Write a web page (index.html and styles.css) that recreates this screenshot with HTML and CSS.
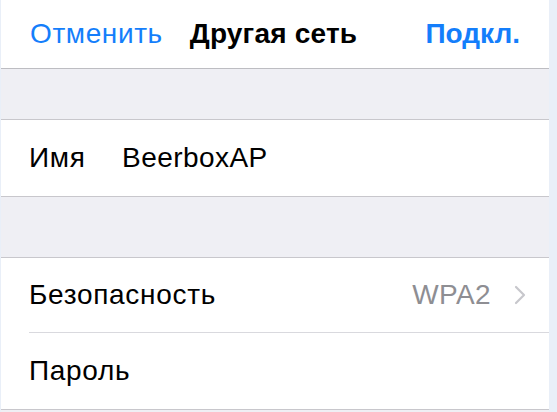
FILE: index.html
```html
<!DOCTYPE html>
<html lang="ru">
<head>
<meta charset="utf-8">
<link rel="stylesheet" href="styles.css">
</head>
<body>
<div class="screen">
  <div class="edge-left"></div>
  <main class="main">
    <header class="nav">
      <span class="nav-btn">Отменить</span>
      <span class="nav-title">Другая сеть</span>
      <span class="nav-btn nav-done">Подкл.</span>
    </header>
    <div class="spacer"></div>
    <section class="group">
      <div class="row">
        <span class="label label-name">Имя</span>
        <span class="value">BeerboxAP</span>
      </div>
    </section>
    <div class="spacer spacer-2"></div>
    <section class="group">
      <div class="row row-sec">
        <span class="label">Безопасность</span>
        <span class="detail">WPA2</span>
        <svg class="chev" width="12" height="20" viewBox="0 0 12 20"><path d="M2 2 L10 10 L2 18" fill="none" stroke="#c7c7cc" stroke-width="2.2" stroke-linecap="round" stroke-linejoin="round"/></svg>
      </div>
      <div class="row row-pass">
        <span class="label">Пароль</span>
      </div>
    </section>
    <div class="spacer-end"></div>
  </main>
  <div class="edge-right"></div>
</div>
</body>
</html>
```
FILE: styles.css
```css
html, body {
  margin: 0;
  padding: 0;
  background: #efeff4;
}
body {
  font-family: "Liberation Sans", Arial, sans-serif;
  -webkit-font-smoothing: antialiased;
}
.screen {
  display: flex;
  width: 557px;
  height: 412px;
  overflow: hidden;
}
.edge-left {
  width: 1px;
  background: #e9eff8;
  flex: none;
}
.edge-right {
  width: 8px;
  background: #e9eff8;
  flex: none;
}
.main {
  flex: 1;
  display: flex;
  flex-direction: column;
  background: #efeff4;
}
.nav {
  height: 68px;
  flex: none;
  background: #fff;
  border-bottom: 1px solid #bdbdc2;
  display: flex;
  align-items: center;
  padding: 0 29px 0 29px;
  font-size: 28px;
}
.nav-btn {
  color: #147efb;
  letter-spacing: 0.6px;
}
.nav-title {
  margin-left: 27px;
  font-weight: bold;
  color: #000;
  letter-spacing: 0.2px;
}
.nav-done {
  margin-left: auto;
  font-weight: bold;
  letter-spacing: 0;
}
.spacer {
  height: 50px;
  flex: none;
  border-bottom: 1px solid #c8c7cc;
}
.spacer-2 {
  height: 60px;
}
.group {
  background: #fff;
  border-bottom: 1px solid #c8c7cc;
  padding-left: 28px;
}
.row {
  display: flex;
  align-items: center;
  height: 76px;
  padding-right: 23px;
  font-size: 28px;
  color: #000;
}
.row-sec {
  height: 74px;
  border-bottom: 1px solid #d9d9de;
}
.label-name {
  width: 93px;
}
.label {
  letter-spacing: 0.7px;
}
.value {
  letter-spacing: 0.45px;
}
.detail {
  margin-left: auto;
  color: #8e8e93;
  letter-spacing: 0.4px;
}
.chev {
  margin-left: 23px;
  flex: none;
}
.spacer-end {
  flex: 1;
}
```
